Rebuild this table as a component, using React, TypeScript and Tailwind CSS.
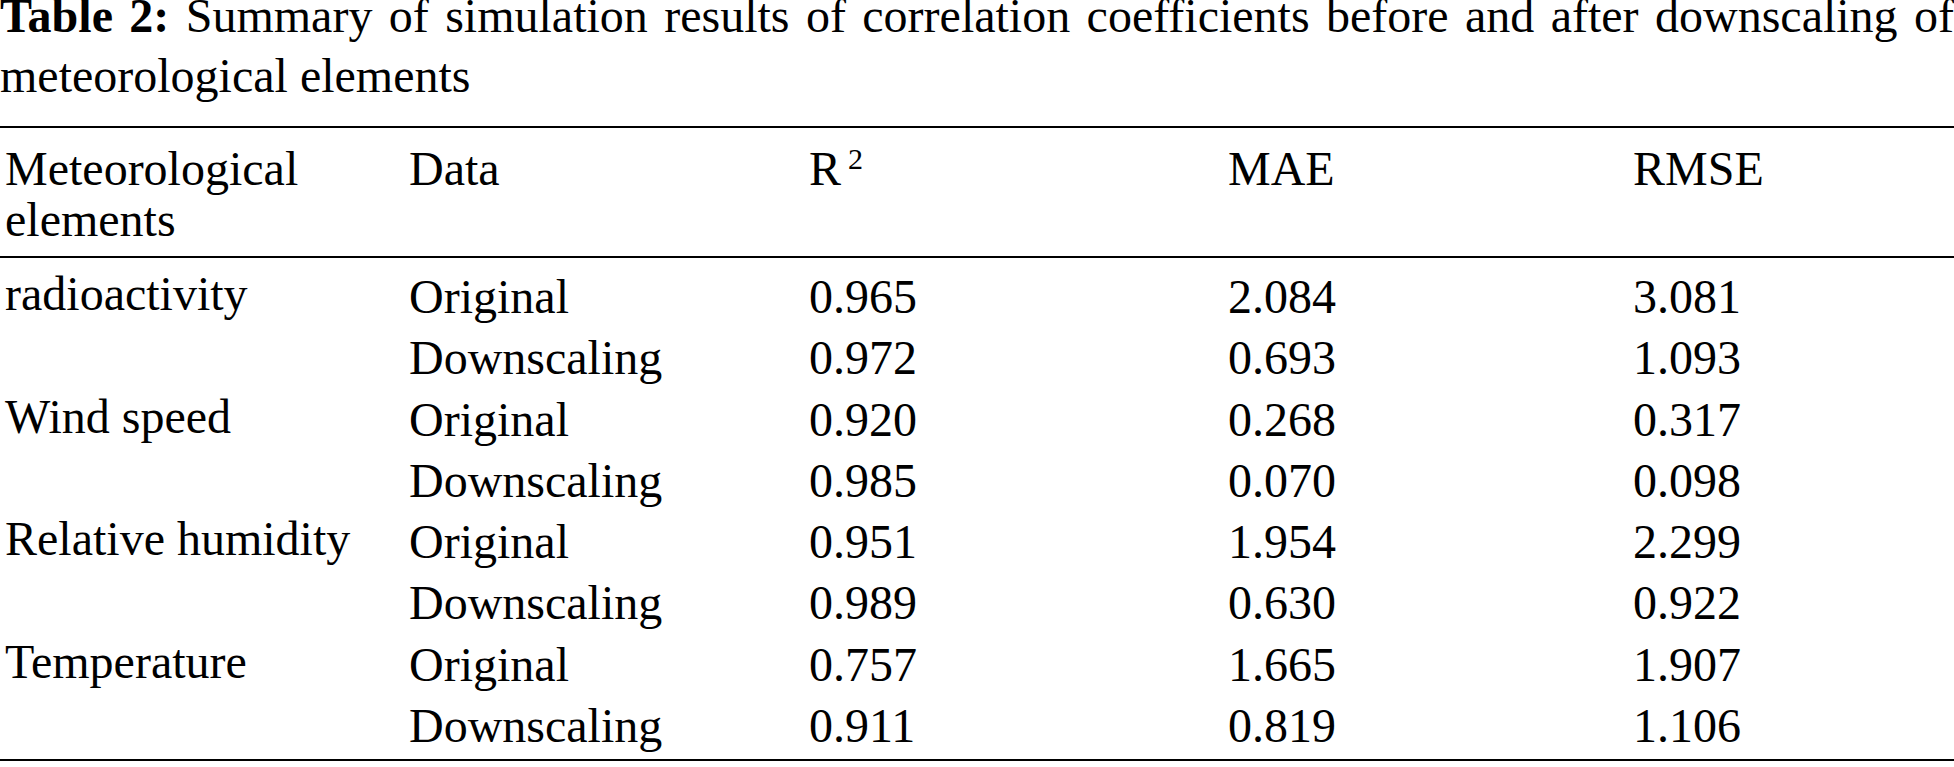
import React from "react";

const rows = [
  {
    name: "radioactivity",
    data: [
      ["Original", "0.965", "2.084", "3.081"],
      ["Downscaling", "0.972", "0.693", "1.093"],
    ],
  },
  {
    name: "Wind speed",
    data: [
      ["Original", "0.920", "0.268", "0.317"],
      ["Downscaling", "0.985", "0.070", "0.098"],
    ],
  },
  {
    name: "Relative humidity",
    data: [
      ["Original", "0.951", "1.954", "2.299"],
      ["Downscaling", "0.989", "0.630", "0.922"],
    ],
  },
  {
    name: "Temperature",
    data: [
      ["Original", "0.757", "1.665", "1.907"],
      ["Downscaling", "0.911", "0.819", "1.106"],
    ],
  },
];

export default function App() {
  return (
    <div className="w-[1954px] bg-white text-black font-['Liberation_Serif',serif] text-[48px]">
      <div className="-mt-[14px] leading-[60px]">
        <p className="text-justify [text-align-last:justify]">
          <span className="font-bold">Table 2:</span> Summary of simulation results of correlation
          coefficients before and after downscaling of
        </p>
        <p>meteorological elements</p>
      </div>

      {/* header */}
      <div className="mt-[20px] border-t-2 border-b-2 border-black grid grid-cols-[409px_400px_419px_405px_1fr] pt-[15px] pb-[11px] leading-[51px]">
        <div className="pl-[5px]">
          Meteorological
          <br />
          elements
        </div>
        <div>Data</div>
        <div>
          R<sup className="relative -top-[16px] ml-[7px] text-[30px] align-baseline">2</sup>
        </div>
        <div>MAE</div>
        <div>RMSE</div>
      </div>

      {/* body */}
      <div className="border-b-2 border-black grid grid-cols-[409px_400px_419px_405px_1fr] pt-[8px] pb-[3px] leading-[61.3px]">
        {rows.map((r) => (
          <React.Fragment key={r.name}>
            <div className="row-span-2 -mt-[3px] pl-[5px] whitespace-nowrap">{r.name}</div>
            {r.data.map((d) => (
              <React.Fragment key={d[0]}>
                <div>{d[0]}</div>
                <div>{d[1]}</div>
                <div>{d[2]}</div>
                <div>{d[3]}</div>
              </React.Fragment>
            ))}
          </React.Fragment>
        ))}
      </div>
    </div>
  );
}
